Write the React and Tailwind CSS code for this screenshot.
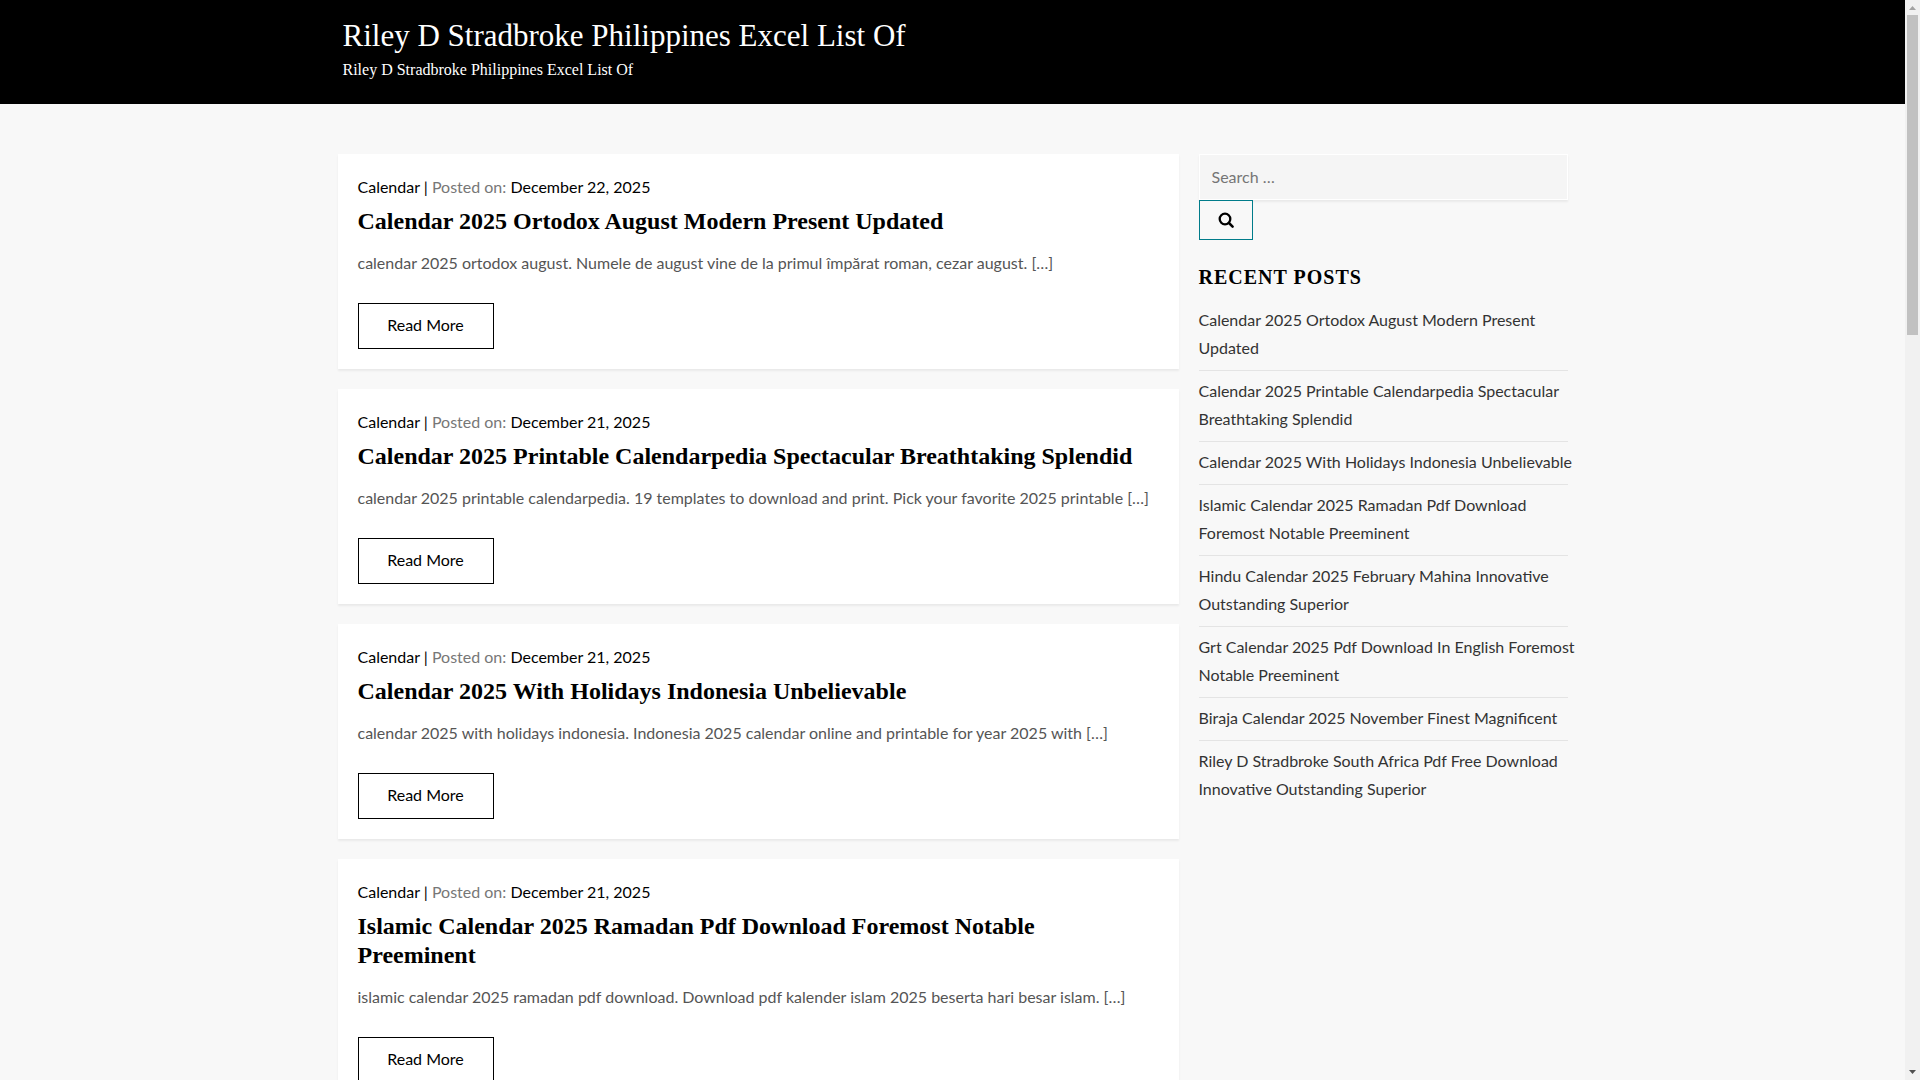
const posts = [
  {
    title: 'Calendar 2025 Ortodox August Modern Present Updated',
    date: 'December 22, 2025',
    excerpt:
      'calendar 2025 ortodox august. Numele de august vine de la primul împărat roman, cezar august. […]',
  },
  {
    title: 'Calendar 2025 Printable Calendarpedia Spectacular Breathtaking Splendid',
    date: 'December 21, 2025',
    excerpt:
      'calendar 2025 printable calendarpedia. 19 templates to download and print. Pick your favorite 2025 printable […]',
  },
  {
    title: 'Calendar 2025 With Holidays Indonesia Unbelievable',
    date: 'December 21, 2025',
    excerpt:
      'calendar 2025 with holidays indonesia. Indonesia 2025 calendar online and printable for year 2025 with […]',
  },
  {
    title: 'Islamic Calendar 2025 Ramadan Pdf Download Foremost Notable Preeminent',
    date: 'December 21, 2025',
    excerpt:
      'islamic calendar 2025 ramadan pdf download. Download pdf kalender islam 2025 beserta hari besar islam. […]',
  },
];

const recentPosts = [
  'Calendar 2025 Ortodox August Modern Present Updated',
  'Calendar 2025 Printable Calendarpedia Spectacular Breathtaking Splendid',
  'Calendar 2025 With Holidays Indonesia Unbelievable',
  'Islamic Calendar 2025 Ramadan Pdf Download Foremost Notable Preeminent',
  'Hindu Calendar 2025 February Mahina Innovative Outstanding Superior',
  'Grt Calendar 2025 Pdf Download In English Foremost Notable Preeminent',
  'Biraja Calendar 2025 November Finest Magnificent',
  'Riley D Stradbroke South Africa Pdf Free Download Innovative Outstanding Superior',
];

function SearchIcon() {
  return (
    <svg width="16" height="16" viewBox="0 0 16 16" fill="none" stroke="currentColor">
      <circle cx="7" cy="7" r="5.300" strokeWidth="2.300" />
      <path d="M11 11l3.600 3.600" strokeWidth="2.500" strokeLinecap="round" />
    </svg>
  );
}

function PostCard({ post }) {
  return (
    <article className="bg-white px-5 pt-[19px] pb-5 shadow-[0_2px_2px_rgba(0,0,0,0.06)]">
      <div className="leading-7 text-black">
        <a href="#">Calendar</a> | <span className="text-[#777777]">Posted on:</span>{' '}
        <a href="#">{post.date}</a>
      </div>
      <h2 className="mt-1.5 font-['Liberation_Serif',serif] text-2xl leading-[29px] font-bold text-black">
        <a href="#">{post.title}</a>
      </h2>
      <p className="mt-[13px] leading-7 text-[#555555]">{post.excerpt}</p>
      <a
        href="#"
        className="mt-[26px] flex h-[46px] w-[136px] items-center justify-center border border-black pb-0.5 text-black"
      >
        Read More
      </a>
    </article>
  );
}

function Sidebar() {
  return (
    <aside className="w-[369px] shrink-0">
      <form onSubmit={(e) => e.preventDefault()}>
        <input
          type="search"
          aria-label="Search"
          placeholder="Search …"
          className="block h-[46px] w-full border border-white bg-[#f5f5f5] px-3 pb-0.5 shadow-[0_2px_2px_rgba(0,0,0,0.06)] placeholder:text-[#757575]"
        />
        <button
          type="submit"
          aria-label="Search"
          className="relative flex h-10 w-[54px] items-center justify-center border border-[#007c8a] bg-[#f8f8f8] text-black"
        >
          <SearchIcon />
        </button>
      </form>

      {/* Recent posts */}
      <h2 className="mt-[23px] font-['Liberation_Serif',serif] text-xl leading-7 font-bold tracking-[1px] text-black uppercase">
        Recent Posts
      </h2>
      <ul className="mt-[9px]">
        {recentPosts.map((title) => (
          <li key={title} className="border-b border-[#e4e4e4] pt-1.5 pb-2 leading-7 last:border-b-0">
            <a href="#" className="-mr-3 block text-[#333333]">
              {title}
            </a>
          </li>
        ))}
      </ul>
    </aside>
  );
}

function ScrollBar() {
  return (
    <div className="flex w-[15px] shrink-0 flex-col items-center bg-[#f1f1f1]" aria-hidden="true">
      <svg width="15" height="15" viewBox="0 0 15 15" className="shrink-0">
        <path d="M4 10h7L7.500 6z" fill="#a3a3a3" />
      </svg>
      <div className="h-80 w-[11px] bg-[#c1c1c1]" />
      <svg width="15" height="15" viewBox="0 0 15 15" className="mt-auto shrink-0">
        <path d="M4 5h7L7.500 9z" fill="#505050" />
      </svg>
    </div>
  );
}

function App() {
  return (
    <div className="flex h-screen bg-[#f8f8f8] font-[Lato,sans-serif] text-base">
      <div className="min-w-0 flex-1 overflow-hidden">
        <header className="bg-black pt-4 pb-5 text-white">
          <div className="mx-auto max-w-[1230px] px-[5px] font-['Liberation_Serif',serif]">
            <h1 className="text-[31px] leading-10">
              <a href="#">Riley D Stradbroke Philippines Excel List Of</a>
            </h1>
            <p className="text-base leading-7">Riley D Stradbroke Philippines Excel List Of</p>
          </div>
        </header>

        <div className="mx-auto flex max-w-[1230px] items-start gap-5 pt-[50px]">
          <main className="flex min-w-0 flex-1 flex-col gap-5">
            {posts.map((post) => (
              <PostCard key={post.title} post={post} />
            ))}
          </main>
          <Sidebar />
        </div>
      </div>
      <ScrollBar />
    </div>
  );
}

export default App;
